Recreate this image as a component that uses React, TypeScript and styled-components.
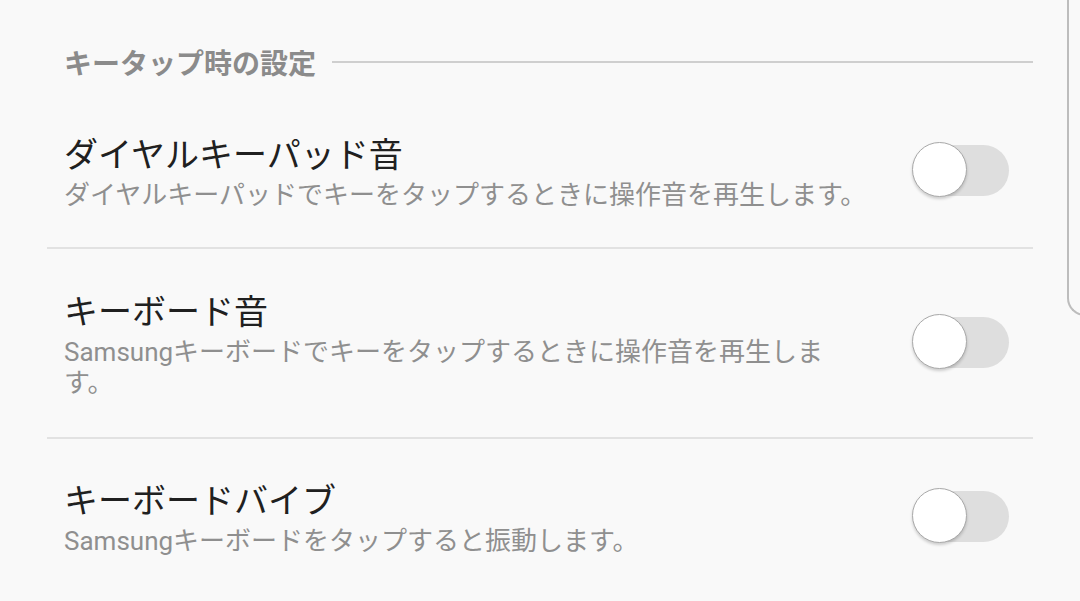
import React from "react";
import styled, { createGlobalStyle } from "styled-components";

const GlobalStyle = createGlobalStyle`
  html, body {
    margin: 0;
    padding: 0;
    background: #f9f9f9;
  }
  body {
    font-family: Roboto, "Noto Sans CJK JP", sans-serif;
    overflow: hidden;
  }
`;

const Page = styled.div`
  position: relative;
  width: 1080px;
  height: 601px;
  overflow: hidden;
  background: #f9f9f9;
  padding: 40px 47px 0 47px;
  box-sizing: border-box;
`;

const List = styled.div`
  width: 986px;
  display: flex;
  flex-direction: column;
`;

const SectionHeader = styled.div`
  display: flex;
  align-items: center;
  gap: 16px;
  padding-left: 17px;
  height: 44px;
`;

const SectionTitle = styled.span`
  font-size: 28px;
  font-weight: 700;
  color: #8b8b8b;
  white-space: nowrap;
`;

const SectionLine = styled.div`
  flex: 1;
  height: 2px;
  background: #cfcfcf;
  margin-top: -1px;
`;

const Row = styled.div<{ $top: number; $bottom: number }>`
  display: flex;
  align-items: center;
  padding: ${(p) => p.$top}px 24px ${(p) => p.$bottom}px 17px;
`;

const Texts = styled.div`
  width: 807px;
  display: flex;
  flex-direction: column;
  gap: 5px;
`;

const Title = styled.div`
  font-size: 34px;
  line-height: 40px;
  color: #202020;
`;

const Summary = styled.div`
  font-size: 26px;
  line-height: 31px;
  color: #8f8f8f;
`;

const Spacer = styled.div`
  flex: 1;
`;

const Divider = styled.div`
  height: 2px;
  background: #e2e2e2;
`;

const Track = styled.div`
  position: relative;
  width: 92px;
  height: 51px;
  margin-top: -6px;
  border-radius: 26px;
  background: #dedede;
  flex: none;
`;

const Thumb = styled.div`
  position: absolute;
  left: -5px;
  top: -3px;
  width: 53px;
  height: 53px;
  border-radius: 50%;
  background: #ffffff;
  border: 1.5px solid #a9a9a9;
  box-shadow: 0 2px 3px rgba(0, 0, 0, 0.18);
`;

const EdgePanel = styled.div`
  position: absolute;
  left: 1067px;
  top: -20px;
  width: 40px;
  height: 336px;
  border-left: 2px solid #bdbdbd;
  border-bottom: 2px solid #bdbdbd;
  border-bottom-left-radius: 18px;
  box-sizing: border-box;
`;

const Switch: React.FC = () => (
  <Track>
    <Thumb />
  </Track>
);

type Item = { title: string; summary: string; top: number; bottom: number };

const items: Item[] = [
  {
    title: "ダイヤルキーパッド音",
    summary: "ダイヤルキーパッドでキーをタップするときに操作音を再生します。",
    top: 51,
    bottom: 36,
  },
  {
    title: "キーボード音",
    summary: "Samsungキーボードでキーをタップするときに操作音を再生します。",
    top: 43,
    bottom: 38,
  },
  {
    title: "キーボードバイブ",
    summary: "Samsungキーボードをタップすると振動します。",
    top: 42,
    bottom: 38,
  },
];

export default function App() {
  return (
    <>
      <GlobalStyle />
      <Page>
        <List>
          <SectionHeader>
            <SectionTitle>キータップ時の設定</SectionTitle>
            <SectionLine />
          </SectionHeader>
          {items.map((item, i) => (
            <React.Fragment key={item.title}>
              {i > 0 && <Divider />}
              <Row $top={item.top} $bottom={item.bottom}>
                <Texts>
                  <Title>{item.title}</Title>
                  <Summary>{item.summary}</Summary>
                </Texts>
                <Spacer />
                <Switch />
              </Row>
            </React.Fragment>
          ))}
        </List>
        <EdgePanel />
      </Page>
    </>
  );
}
